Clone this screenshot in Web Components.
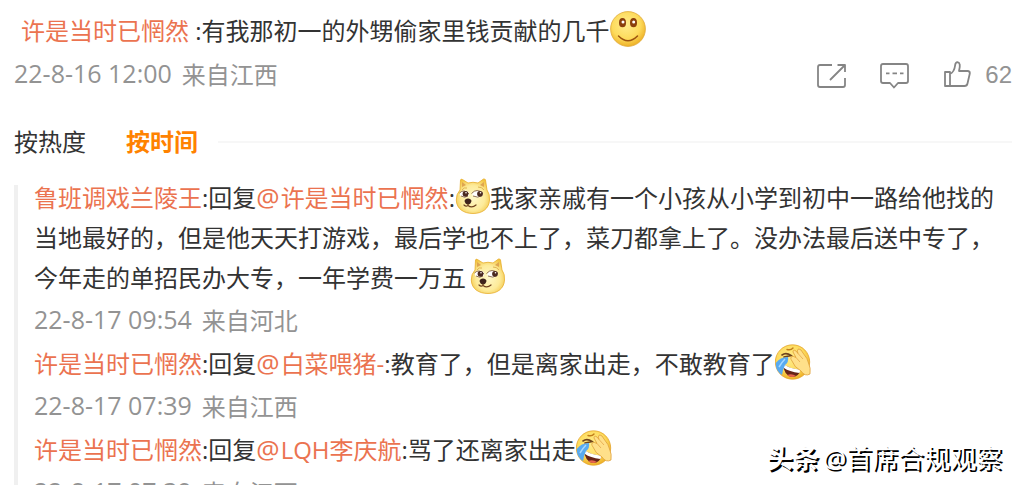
<!DOCTYPE html>
<html lang="zh-CN">
<head>
<meta charset="utf-8">
<title>评论</title>
<style>
  html { --name: #eb7350; --muted: #939393; --ink: #333; --accent: #ff8200; }
  body { margin: 0; background: #fff; color: var(--ink); font: 24px/40px "Open Sans", "Noto Sans CJK SC", sans-serif; }
</style>
</head>
<body>
<comment-page>
  <comment-main slot="main" date="22-8-16 12:00" place="江西" likes="62">
    <user-link slot="author">许是当时已惘然</user-link>:有我那初一的外甥偷家里钱贡献的几千<face-icon kind="smile"></face-icon>
  </comment-main>
  <sort-bar slot="sort"></sort-bar>
  <reply-list slot="replies">
    <reply-item date="22-8-17 09:54" place="河北"><user-link>鲁班调戏兰陵王</user-link>:回复<user-link at>许是当时已惘然</user-link>:<face-icon kind="doge"></face-icon>我家亲戚有一个小孩从小学到初中一路给他找的当地最好的，但是他天天打游戏，最后学也不上了，菜刀都拿上了。没办法最后送中专了，今年走的单招民办大专，一年学费一万五<face-icon kind="doge" spaced></face-icon></reply-item>
    <reply-item date="22-8-17 07:39" place="江西"><user-link>许是当时已惘然</user-link>:回复<user-link at>白菜喂猪-</user-link>:教育了，但是离家出走，不敢教育了<face-icon kind="laugh"></face-icon></reply-item>
    <reply-item date="22-8-17 07:39" place="江西"><user-link>许是当时已惘然</user-link>:回复<user-link at>LQH李庆航</user-link>:骂了还离家出走<face-icon kind="laugh"></face-icon></reply-item>
  </reply-list>
  <source-mark slot="mark"><span slot="site">头条</span>@首席合规观察</source-mark>
</comment-page>

<script>
const define = (name, render) => customElements.define(name, class extends HTMLElement {
  connectedCallback() {
    if (this.shadowRoot) return;
    this.attachShadow({ mode: "open" }).innerHTML = render(this);
  }
});

define("comment-page", () => `
<style>
  :host { display: flex; flex-direction: column; position: relative; box-sizing: border-box; height: 100vh; overflow: hidden; padding: 11px 5px 0 14px; }
</style>
<slot name="main"></slot><slot name="sort"></slot><slot name="replies"></slot><slot name="mark"></slot>`);

define("user-link", el => `<style>
  :host { display: inline; }
  a { color: var(--name); text-decoration: none; }
  .at { font-size: 26px; line-height: 24px; margin-right: 1px; }
</style><a href="#">${el.hasAttribute("at") ? '<span class="at">@</span>' : ""}<slot></slot></a>`);

define("post-stamp", el => `
<style>
  :host { display: flex; gap: 10px; color: var(--muted); white-space: nowrap; }
  time { font-size: 25px; line-height: 36px; }
</style>
<time>${el.getAttribute("date")}</time><span>来自${el.getAttribute("place")}</span>`);

const icons = {
  share: '<path d="M15 4H3Q1 4 1 6V24Q1 26 3 26H26Q28 26 28 24V17M13 19L28 4M20.5 4H28V11"/>',
  comment: '<path d="M3 3H26Q28 3 28 5V20Q28 22 26 22H18L14 26.500L10 22H3Q1 22 1 20V5Q1 3 3 3Z"/><path d="M6 12.300H9.500M12.500 12.300H17M20 12.300H23.500"/>',
  like: '<path d="M2 11H7V25H2ZM7 13C10 11.500 11.500 9 12 5C12.200 2.500 13 1.200 14.500 1.200C17 1.500 17.500 4.500 16 10H25Q27 10.300 26.800 12.500L24.500 22.500Q24 25 21.500 25H7"/>'
};
define("action-button", el => `
<style>
  :host { display: block; }
  button { display: flex; align-items: center; gap: 12px; padding: 0; border: 0; background: none; color: var(--muted); font: 24px/30px "Liberation Sans", sans-serif; }
  svg { width: 30px; height: 28px; fill: none; stroke: #858585; stroke-width: 1.800; stroke-linejoin: round; }
</style>
<button type="button" aria-label="${el.getAttribute("label")}"><svg viewBox="0 0 30 28">${icons[el.getAttribute("icon")]}</svg><slot></slot></button>`);

define("comment-main", el => `
<style>
  :host { display: block; }
  p { margin: 0; padding-left: 7px; }
  footer { display: flex; align-items: center; justify-content: space-between; height: 48px; }
  .actions { display: flex; align-items: center; gap: 33px; }
</style>
<p><slot name="author"></slot> <slot></slot></p>
<footer>
  <post-stamp date="${el.getAttribute("date")}" place="${el.getAttribute("place")}"></post-stamp>
  <div class="actions">
    <action-button icon="share" label="转发"></action-button>
    <action-button icon="comment" label="评论"></action-button>
    <action-button icon="like" label="赞">${el.getAttribute("likes")}</action-button>
  </div>
</footer>`);

define("sort-bar", () => `
<style>
  :host { display: flex; align-items: center; margin-top: 23px; }
  button { padding: 0; margin-right: 40px; border: 0; background: none; color: inherit; font: inherit; }
  button[aria-pressed=true] { color: var(--accent); font-weight: 700; margin-right: 20px; }
  hr { flex: 1; margin: 0; border: 0; border-top: 2px solid #f7f7f7; }
</style>
<button type="button" aria-pressed="false">按热度</button><button type="button" aria-pressed="true">按时间</button><hr>`);

define("reply-list", () => `
<style>
  :host { display: grid; grid-template-columns: 4px 1fr; column-gap: 16px; margin-top: 16px; flex: none; }
  .rule { margin-top: 7px; background: #f0f0f0; }
</style>
<div class="rule"></div><div><slot></slot></div>`);

define("reply-item", el => `
<style>
  :host { display: block; }
  p { margin: 0; padding-right: 4px; }
  footer { display: flex; align-items: center; height: 46px; }
</style>
<p><slot></slot></p>
<footer><post-stamp date="${el.getAttribute("date")}" place="${el.getAttribute("place")}"></post-stamp></footer>`);

const defs = `<defs><radialGradient id="g" cx=".45" cy=".38" r=".62"><stop offset="0" stop-color="#ffec8c"/><stop offset=".65" stop-color="#fddb5c"/><stop offset="1" stop-color="#eeb127"/></radialGradient>
<radialGradient id="d" cx=".5" cy=".55" r=".6"><stop offset="0" stop-color="#fff8c8"/><stop offset=".6" stop-color="#fdeb9a"/><stop offset="1" stop-color="#f2c33f"/></radialGradient></defs>`;
const faces = {
  smile: `<circle cx="18" cy="18" r="17.400" fill="url(#g)" stroke="#e0a93a" stroke-width=".8"/>
    <ellipse cx="12.500" cy="11.700" rx="3.500" ry="4.600" fill="#8a3f0c"/><ellipse cx="23.500" cy="11.700" rx="3.500" ry="4.600" fill="#8a3f0c"/>
    <circle cx="13" cy="11" r="1.500" fill="#fff"/><circle cx="23.700" cy="11" r="1.500" fill="#fff"/>
    <path d="M8.500 25Q18 34.500 27.500 25" fill="none" stroke="#9b520e" stroke-width="1.500" stroke-linecap="round"/>`,
  doge: `<path d="M5 12L5.500 2Q6 .5 7.500 1.500L13 5Q18 3.500 23 5L28.500 1Q30 .5 30.500 2L32 12Q35 16 34.500 22C34 31 27 35.500 18 35.500S1.500 31 1.300 22Q1.200 16 5 12Z" fill="url(#d)" stroke="#e7ad2c" stroke-width=".8"/>
    <path d="M7 9V4L11 7ZM29 9V4L25 7Z" fill="#dea551"/>
    <path d="M7 12Q9 9 12 10M23 9Q27 9 29 12" fill="none" stroke="#dfb453" stroke-width="1"/>
    <ellipse cx="9.500" cy="16" rx="4.800" ry="3.500" fill="#fff"/><ellipse cx="22.500" cy="16" rx="5.300" ry="3.500" fill="#fff"/>
    <path d="M4.500 15Q9 10.500 14 16M16.500 15.500Q22 9.500 28 15.500M6 18Q10 20.500 13 18M18 18Q23 20.500 27 17.500" fill="none" stroke="#77502c" stroke-width=".8"/>
    <circle cx="10.500" cy="15.800" r="2.900" fill="#4b2a20"/><circle cx="25" cy="15.800" r="2.900" fill="#4b2a20"/><circle cx="11" cy="14.800" r=".8" fill="#fff"/><circle cx="25.500" cy="14.800" r=".8" fill="#fff"/>
    <path d="M9.500 23Q10 20.500 13 20.500T16.500 23Q15.500 26.500 13 26.500T9.500 23Z" fill="#3f241d"/>
    <path d="M13 26V27.500Q17 30.500 21 27M13 27.500Q11 29 9 27" fill="none" stroke="#70421e" stroke-width="1.200" stroke-linecap="round"/>`,
  laugh: `<circle cx="17.500" cy="18" r="17.200" fill="url(#g)" stroke="#e5a52d" stroke-width=".8"/>
    <path d="M12 5.500Q16 6.500 18 4" fill="none" stroke="#c17d1a" stroke-width="1.400" stroke-linecap="round"/>
    <path d="M7 11Q11 8 16 11.500L9 13" fill="none" stroke="#70441c" stroke-width="1.600" stroke-linecap="round"/>
    <path d="M8 20Q15 25 25.500 25.500Q24 33 17 33Q9 32 8 20Z" fill="#652418"/>
    <path d="M9 20.500Q16 25 25.500 25.500L24.500 29Q14 27.500 9 24Z" fill="#fff"/>
    <path d="M12 31Q17 29 21 32Q16 34.500 12 31Z" fill="#e76450"/>
    <path d="M13 13Q14 18 10 21Q8 25 7 31Q.5 27 .8 19Q5 13 13 13Z" fill="#58aaf0"/>
    <path d="M10 15Q7 18 4 23" fill="none" stroke="#a8d9ff" stroke-width="1.500"/>
    <path d="M17 17Q14.500 13.500 17 12.500Q18 12 21 13.500L18 8Q18 5 21 7L23 9.500Q21.500 5 24 5Q26 5 28 9Q33 15 33.500 19Q36 24 35 30Q30 33 26 27Q19 23 17 17Z" fill="#ffe08a" stroke="#db962f" stroke-width=".7" stroke-linejoin="round"/>
    <path d="M21 13.500L25 18M23 9.500L28 15" fill="none" stroke="#e4a64b" stroke-width=".8"/>`
};
define("face-icon", el => `
<style>
  :host { display: inline-block; vertical-align: top; width: 36px; height: 36px; line-height: 0; }
  :host([spaced]) { margin-left: 4px; }
  :host([kind=doge]) { width: 35px; }
  svg { width: 36px; height: 36px; }
</style>
<svg viewBox="0 0 36 36" aria-hidden="true">${defs}${faces[el.getAttribute("kind")]}</svg>`);

define("source-mark", () => `
<style>
  :host { display: flex; gap: 4px; position: absolute; right: 15px; bottom: 7px; color: #fff; font-size: 26px; white-space: nowrap; text-shadow: 2px 2px 0 #000; }
  b { font-weight: 700; }
</style>
<b><slot name="site"></slot></b><span><slot></slot></span>`);
</script>
</body>
</html>
